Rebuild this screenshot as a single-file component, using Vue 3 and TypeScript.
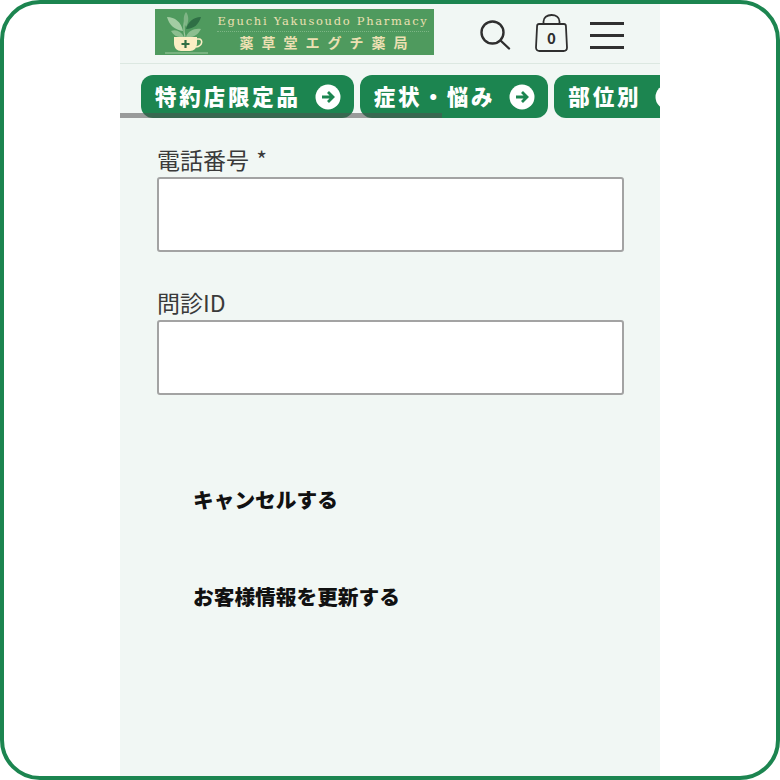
<template>
  <div class="frame">
    <div class="page">
      <header class="site-header">
        <a class="logo">
          <svg class="logo__mark" viewBox="0 0 60 46" width="60" height="46" aria-hidden="true">
            <path d="M30 28C28 20 29 12 31 5" stroke="#9cc79c" stroke-width="1.200" fill="none" />
            <path d="M31 3c3 4 3 10 0 15c-3-5-3-11 0-15Z" fill="#7fb485" />
            <path d="M12 8c8 0 14 5 16 14C20 21 14 16 12 8Z" fill="#a3cda3" />
            <path d="M46 8c-8 0-13 5-15 12c8 0 13-5 15-12Z" fill="#2f6f45" />
            <path d="M16 22c5-2 10 0 13 6c-6 1-10-1-13-6Z" fill="#8dbf90" />
            <path d="M46 20c-7-1-13 2-15 8c7 1 12-2 15-8Z" fill="#8dbf90" />
            <path d="M19 28h23v6c0 5-3 8-7 8H26c-4 0-7-3-7-8Z" fill="#fbeec4" />
            <path d="M42 30h2c4 0 4 7-3 8" stroke="#fbeec4" stroke-width="1.600" fill="none" />
            <path d="M30.500 31v8M26.500 35h8" stroke="#2f6f45" stroke-width="2.200" />
            <path d="M10 44h43" stroke="#a3cda3" stroke-width="1" />
          </svg>
          <div class="logo__text">
            <span class="logo__en">Eguchi Yakusoudo Pharmacy</span>
            <span class="logo__ja">薬草堂エグチ薬局</span>
          </div>
        </a>
        <div class="header-icons">
          <svg class="search" viewBox="0 0 31 30" width="31" height="30" fill="none" stroke="#2f2f2f" stroke-width="2.400" aria-hidden="true">
            <circle cx="12.500" cy="12.500" r="11" />
            <path d="M20.500 20.500L29 28.500" stroke-linecap="round" />
          </svg>
          <div class="cart">
            <svg viewBox="0 0 33 38" width="33" height="38" fill="none" stroke="#2f2f2f" stroke-width="1.800" aria-hidden="true">
              <path d="M4 10h25c1.200 0 1.800.7 1.900 1.800L32 33.500c0 2.300-1.500 3.500-3.500 3.500h-24C2.500 37 1 35.800 1 33.500L2.100 11.800C2.200 10.700 2.800 10 4 10Z" />
              <path d="M8.500 10V7.500C8.500 3.500 12 1 16.500 1S24.500 3.500 24.500 7.500V10" />
            </svg>
            <span class="cart__count">0</span>
          </div>
          <div class="burger"><span /><span /><span /></div>
        </div>
      </header>

      <nav class="cat-nav">
        <div class="cat-nav__track">
          <a v-for="item in categories" :key="item" class="pill">
            <span class="pill__label">{{ item }}</span>
            <svg viewBox="0 0 26 26" width="26" height="26" class="pill__arrow" aria-hidden="true">
              <circle cx="13" cy="13" r="12.500" fill="#fff" />
              <path d="M7 13h11M13 8l5 5-5 5" fill="none" stroke="#1c8550" stroke-width="2.800" />
            </svg>
          </a>
        </div>
        <div class="cat-nav__scrollbar" />
      </nav>

      <form class="form" @submit.prevent>
        <label class="field">
          <span class="field__label">電話番号 *</span>
          <input class="field__input" type="text" />
        </label>
        <label class="field">
          <span class="field__label">問診ID</span>
          <input class="field__input" type="text" />
        </label>
        <div class="actions">
          <a class="action">キャンセルする</a>
          <a class="action">お客様情報を更新する</a>
        </div>
      </form>
    </div>
  </div>
</template>

<script setup lang="ts">
const categories: string[] = ['特約店限定品', '症状・悩み', '部位別']
</script>

<style>
html,
body {
  margin: 0;
  background: #fff;
}
</style>

<style scoped>
.frame {
  box-sizing: border-box;
  width: 780px;
  height: 780px;
  border: 4px solid #1c8550;
  border-radius: 40px;
  overflow: hidden;
  background: #fff;
  padding-left: 116px;
  font-family: "Noto Sans CJK JP", "Noto Sans", sans-serif;
}

.page {
  width: 540px;
  height: 100%;
  background: #f1f7f4;
}

.site-header {
  box-sizing: border-box;
  height: 60px;
  display: flex;
  justify-content: space-between;
  padding: 5px 36px 0 35px;
  border-bottom: 1px solid #dce8e1;
}

.logo {
  width: 279px;
  height: 46px;
  background: #4f9a5e;
  display: flex;
}

.logo__mark {
  flex: none;
}

.logo__text {
  flex: 1;
  min-width: 0;
  display: flex;
  flex-direction: column;
  align-items: center;
  color: #ece0b2;
}

.logo__en {
  font-family: "DejaVu Serif", "Liberation Serif", serif;
  font-size: 11.500px;
  line-height: 16px;
  margin: 4px 3px 0 0;
  letter-spacing: 1.700px;
  white-space: nowrap;
  border-bottom: 1px dotted #7db585;
  padding-bottom: 2px;
}

.logo__ja {
  font-size: 14px;
  line-height: 20px;
  font-weight: 700;
  letter-spacing: 8px;
  white-space: nowrap;
  margin-right: -6px;
}

.header-icons {
  display: flex;
  align-items: flex-start;
}

.search {
  margin: 11px 24px 0 0;
}

.cart {
  position: relative;
  width: 33px;
  height: 38px;
  margin: 5px 22px 0 0;
}

.cart__count {
  position: absolute;
  left: 0;
  right: 0;
  top: 14px;
  text-align: center;
  font-size: 15px;
  line-height: 20px;
  font-weight: 700;
  color: #2f2f2f;
}

.burger {
  width: 34px;
  display: flex;
  flex-direction: column;
  gap: 9px;
  margin-top: 13px;
}

.burger span {
  height: 3px;
  background: #2f2f2f;
}

.cat-nav {
  position: relative;
  height: 54px;
  overflow: hidden;
}

.cat-nav__track {
  display: flex;
  gap: 6px;
  padding: 11px 0 0 21px;
}

.pill {
  flex: none;
  height: 43px;
  box-sizing: border-box;
  display: flex;
  align-items: center;
  gap: 14px;
  padding: 0 13px 0 14px;
  border-radius: 12px;
  background: #1c8550;
  color: #fff;
  font-size: 21.500px;
  font-weight: 900;
  letter-spacing: 2.800px;
  white-space: nowrap;
}

.pill__label {
  margin-top: -2px;
}

.pill__arrow {
  flex: none;
}

.cat-nav__scrollbar {
  position: absolute;
  left: 0;
  top: 49px;
  width: 322px;
  height: 5px;
  background: rgba(80, 80, 80, 0.55);
}

.form {
  padding: 27px 36px 0 37px;
}

.field {
  display: block;
  margin-bottom: 36px;
}

.field__label {
  display: block;
  font-size: 23px;
  line-height: 28px;
  color: #3a3a3a;
  margin-bottom: 4px;
  word-spacing: 2px;
}

.field__input {
  display: block;
  box-sizing: border-box;
  width: 467px;
  height: 75px;
  border: 2px solid #a3a3a3;
  border-radius: 3px;
  background: #fff;
  padding: 0 12px;
}

.actions {
  display: flex;
  flex-direction: column;
  gap: 67px;
  padding: 53px 0 0 36px;
}

.action {
  font-size: 20.700px;
  line-height: 30px;
  font-weight: 900;
  color: #111;
  white-space: nowrap;
}
</style>
